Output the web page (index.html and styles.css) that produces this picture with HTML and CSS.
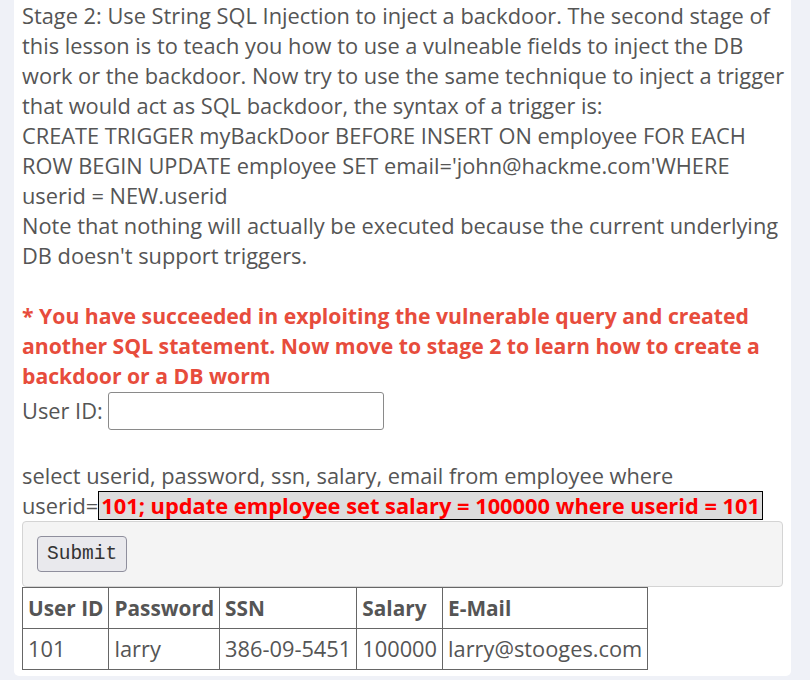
FILE: index.html
```html
<!DOCTYPE html>
<html>
<head>
<meta charset="utf-8">
<link rel="stylesheet" href="styles.css">
</head>
<body>
<div class="card">
  <div class="lesson">
    Stage 2: Use String SQL Injection to inject a backdoor. The second stage of<br>
    this lesson is to teach you how to use a vulneable fields to inject the DB<br>
    work or the backdoor. Now try to use the same technique to inject a trigger<br>
    that would act as SQL backdoor, the syntax of a trigger is:<br>
    CREATE TRIGGER myBackDoor BEFORE INSERT ON employee FOR EACH<br>
    ROW BEGIN UPDATE employee SET email='john@hackme.com'WHERE<br>
    userid = NEW.userid<br>
    Note that nothing will actually be executed because the current underlying<br>
    DB doesn't support triggers.<br><br>
    <b class="success">* You have succeeded in exploiting the vulnerable query and created another SQL statement. Now move to stage 2 to learn how to create a backdoor or a DB worm</b>
  </div>
  <form class="form">
    <div class="line">User ID: <input class="field" type="text"></div>
    <div class="query">select userid, password, ssn, salary, email from employee where<br>userid=<span class="injected">101; update employee set salary = 100000 where userid = 101</span></div>
    <div class="actions"><button class="btn" type="button">Submit</button></div>
  </form>
  <table class="results">
    <tr><th>User ID</th><th>Password</th><th>SSN</th><th>Salary</th><th>E-Mail</th></tr>
    <tr><td>101</td><td>larry</td><td>386-09-5451</td><td>100000</td><td>larry@stooges.com</td></tr>
  </table>
</div>
</body>
</html>
```
FILE: styles.css
```css
html, body {
  margin: 0;
  padding: 0;
  background: #eff1f7;
}
body {
  font-family: "Open Sans", "Noto Sans", sans-serif;
  font-size: 21.8px;
  line-height: 30px;
  color: #555;
}
.card {
  margin-left: 14px;
  width: 761px;
  padding: 1px 8px 6px 8px;
  background: #fff;
  border-radius: 0 0 5px 5px;
}
.lesson {
  margin-right: -8px;
}
.success {
  color: #e74c3c;
  font-weight: bold;
  font-size: 21.2px;
}
.form {
  margin: 0;
}
.line {
  display: flex;
  align-items: center;
  gap: 5px;
  height: 40px;
}
.field {
  box-sizing: border-box;
  width: 276px;
  height: 38px;
  border: 1px solid #8a8a8a;
  border-radius: 3px;
  padding: 1px 4px;
  margin: 0;
  font: inherit;
}
.query {
  margin-top: 30px;
}
.injected {
  display: inline-block;
  line-height: 27px;
  background: #dddddd;
  border: 1px solid #000;
  color: #ff0000;
  font-weight: bold;
  font-size: 21.85px;
  padding: 0 2px 0 2px;
}
.actions {
  background: #f4f4f4;
  border: 1px solid #d4d4d4;
  border-radius: 4px;
  padding: 14px 14px;
}
.btn {
  font-family: "Liberation Mono", monospace;
  font-size: 19.5px;
  line-height: 24px;
  color: #333;
  background: #e9e9ed;
  border: 1px solid #8f8f9d;
  border-radius: 4px;
  padding: 5px 9px;
  margin: 0;
}
.results {
  border-collapse: collapse;
}
.results th, .results td {
  border: 1px solid #666;
  padding: 5px 5px;
  text-align: left;
}
.results th {
  font-weight: bold;
  font-size: 20.8px;
}
```
